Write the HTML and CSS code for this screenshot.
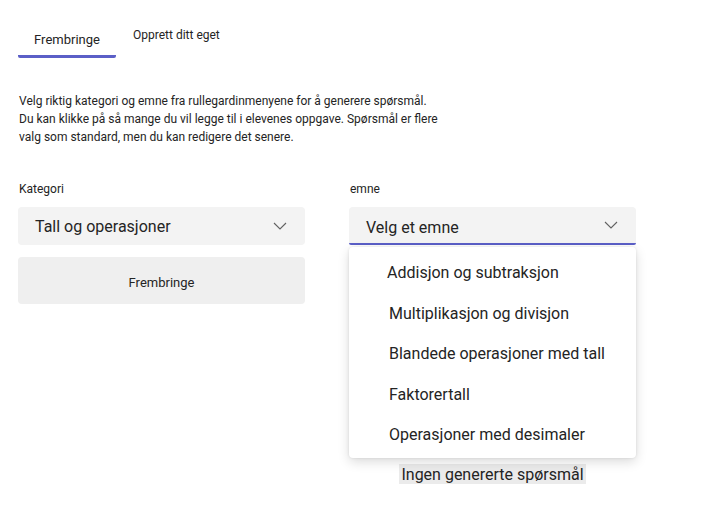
FILE: index.html
```html
<!DOCTYPE html>
<html lang="no">
<head>
    <meta charset="UTF-8">
    <title>Frembringe</title>
    <link rel="stylesheet" href="styles.css">
</head>
<body>
    <div class="tabs">
        <div class="tab active">Frembringe</div>
        <div class="tab small">Opprett ditt eget</div>
    </div>

    <p class="intro">
        Velg riktig kategori og emne fra rullegardinmenyene for å generere spørsmål.<br>
        Du kan klikke på så mange du vil legge til i elevenes oppgave. Spørsmål er flere<br>
        valg som standard, men du kan redigere det senere.
    </p>

    <div class="columns">
        <div class="col">
            <label class="field-label">Kategori</label>
            <div class="select">
                <span>Tall og operasjoner</span>
                <svg class="chev" width="14" height="8" viewBox="0 0 14 8"><path d="M1 1l6 6 6-6" fill="none" stroke="#616161" stroke-width="1.1"/></svg>
            </div>
            <button class="generate">Frembringe</button>
        </div>
        <div class="col">
            <label class="field-label">emne</label>
            <div class="select open">
                <span>Velg et emne</span>
                <svg class="chev" width="14" height="8" viewBox="0 0 14 8"><path d="M1 1l6 6 6-6" fill="none" stroke="#616161" stroke-width="1.1"/></svg>
            </div>
            <div class="menu-wrap">
                <ul class="menu">
                    <li class="first">Addisjon og subtraksjon</li>
                    <li>Multiplikasjon og divisjon</li>
                    <li>Blandede operasjoner med tall</li>
                    <li>Faktorertall</li>
                    <li>Operasjoner med desimaler</li>
                </ul>
                <div class="empty"><span>Ingen genererte spørsmål</span></div>
            </div>
        </div>
    </div>
</body>
</html>
```

FILE: styles.css
```css
body {
    margin: 0;
    padding: 0 18px;
    font-family: "Segoe UI", Roboto, "Noto Sans", sans-serif;
    color: #242424;
    background: #fff;
}
.tabs {
    display: flex;
    padding-top: 22px;
    gap: 17px;
}
.tab {
    font-size: 13px;
    height: 36px;
    box-sizing: border-box;
}
.tab.active {
    width: 98px;
    text-align: center;
    padding-top: 10px;
    border-bottom: 3px solid #5b5fc7;
    border-radius: 0 0 2px 2px;
}
.tab.small {
    font-size: 12px;
    padding-top: 6px;
}
.intro {
    margin: 34px 0 0 1px;
    font-size: 12px;
    line-height: 18px;
}
.columns {
    display: flex;
    gap: 44px;
    margin-top: 36px;
}
.col {
    width: 287px;
}
.field-label {
    display: block;
    font-size: 12px;
    margin-left: 1px;
    height: 20px;
}
.select {
    display: flex;
    align-items: center;
    justify-content: space-between;
    height: 38px;
    background: #f3f3f3;
    border-radius: 4px;
    padding: 0 18px 0 17px;
    font-size: 16px;
    box-sizing: border-box;
    margin-top: 5px;
}
.select span {
    margin-top: 1px;
}
.select.open {
    border-bottom: 2px solid #5b5fc7;
    border-radius: 4px 4px 2px 2px;
}
.select.open span {
    margin-top: 5px;
}
.generate {
    display: block;
    width: 100%;
    height: 47px;
    margin-top: 12px;
    padding-top: 4px;
    background: #efefef;
    border: none;
    border-radius: 4px;
    font-family: inherit;
    font-size: 13px;
    color: #242424;
}
.menu-wrap {
    position: relative;
}
.menu {
    list-style: none;
    margin: 2px 0 0;
    padding: 6px 0 2px;
    background: #fff;
    border-radius: 4px;
    box-shadow: 0 4px 12px rgba(0,0,0,0.14), 0 0 3px rgba(0,0,0,0.1);
    position: relative;
    z-index: 2;
}
.menu li {
    font-size: 16px;
    height: 40.5px;
    line-height: 40px;
    padding-left: 40px;
}
.menu li.first {
    padding-left: 38px;
}
.empty {
    text-align: center;
    margin-top: 7px;
    font-size: 16px;
}
.empty span {
    background: #ebebeb;
    padding: 1px 2px;
}
```
